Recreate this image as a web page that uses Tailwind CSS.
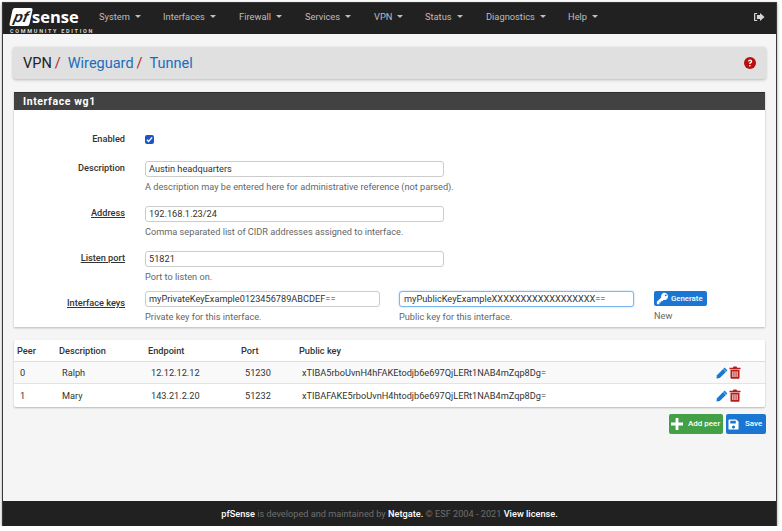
<!DOCTYPE html>
<html lang="en">
<head>
    <meta charset="utf-8"/>
    <title>pfSense - VPN / Wireguard / Tunnel</title>
    <script src="https://cdn.jsdelivr.net/npm/@tailwindcss/browser@4"></script>
</head>
<body class="bg-white font-['Roboto',sans-serif] text-[#212121] overflow-hidden">
    <div class="ml-[2px] mt-[2px] w-[775px] h-[524px] border-x border-t border-[#3a3a3a] bg-[#f5f5f5] flex flex-col shadow-[0_1px_3px_rgba(0,0,0,0.4)]">
        <!-- Navbar -->
        <nav class="h-[31px] shrink-0 bg-[#212121] flex items-center pb-[4px] text-[9.3px] text-[#bdbdbd]">
            <div class="w-[96px] pl-[8px] pt-[5px] shrink-0 self-start flex flex-col">
                <div class="flex items-center h-[18px]">
                    <span class="w-[20px] h-[18px] -skew-x-12 bg-white text-[#212121] font-bold italic text-[15px] leading-[17px] text-center rounded-[2px] font-['Liberation_Sans',sans-serif]">pf</span>
                    <span class="text-white font-bold text-[16.5px] leading-[18px] ml-[1px] font-['Open_Sans',sans-serif]">sense</span>
                </div>
                <span class="text-[#d8d8d8] text-[5.5px] leading-[6px] font-bold tracking-[1.7px] whitespace-nowrap -ml-[1px] mt-[2px]">COMMUNITY EDITION</span>
            </div>
            <div class="flex items-center">
                <a class="w-[64px] flex items-center whitespace-nowrap">System<i class="ml-[5px] border-x-[3px] border-t-[3px] border-x-transparent border-t-[#bdbdbd]"></i></a>
                <a class="w-[76px] flex items-center whitespace-nowrap">Interfaces<i class="ml-[5px] border-x-[3px] border-t-[3px] border-x-transparent border-t-[#bdbdbd]"></i></a>
                <a class="w-[66px] flex items-center whitespace-nowrap">Firewall<i class="ml-[5px] border-x-[3px] border-t-[3px] border-x-transparent border-t-[#bdbdbd]"></i></a>
                <a class="w-[69px] flex items-center whitespace-nowrap">Services<i class="ml-[5px] border-x-[3px] border-t-[3px] border-x-transparent border-t-[#bdbdbd]"></i></a>
                <a class="w-[51px] flex items-center whitespace-nowrap">VPN<i class="ml-[5px] border-x-[3px] border-t-[3px] border-x-transparent border-t-[#bdbdbd]"></i></a>
                <a class="w-[61px] flex items-center whitespace-nowrap">Status<i class="ml-[5px] border-x-[3px] border-t-[3px] border-x-transparent border-t-[#bdbdbd]"></i></a>
                <a class="w-[82px] flex items-center whitespace-nowrap">Diagnostics<i class="ml-[5px] border-x-[3px] border-t-[3px] border-x-transparent border-t-[#bdbdbd]"></i></a>
                <a class="flex items-center whitespace-nowrap">Help<i class="ml-[5px] border-x-[3px] border-t-[3px] border-x-transparent border-t-[#bdbdbd]"></i></a>
            </div>
            <svg class="ml-auto mr-[11px] w-[12px] h-[10px]" viewBox="0 0 13 11" fill="#d4d4d4">
                <path d="M4.5 1H2.2C1.500 1 1 1.500 1 2.200v6.600C1 9.500 1.500 10 2.200 10h2.300V8.700H2.400V2.300h2.100z"/>
                <path d="M7.600 1l5 4.500-5 4.500V7.600H4.200V3.400h3.400z"/>
            </svg>
        </nav>

        <main class="flex-1 px-[11px] flex flex-col">
            <!-- Breadcrumb -->
            <div class="mt-[13px] -ml-[1px] w-[753px] h-[32px] bg-[#e0e0e0] rounded-[3px] shadow-[0_1px_3px_rgba(0,0,0,0.25)] flex items-center pl-[10px] pr-[10px] text-[14.5px]">
                <span class="mt-[2px]">VPN</span><span class="mt-[2px] text-[#b71c1c] ml-[3px]">/</span>
                <a class="mt-[2px] text-[#1a6dbd] ml-[7px]">Wireguard</a><span class="mt-[2px] text-[#b71c1c] ml-[3px]">/</span>
                <a class="mt-[2px] text-[#1a6dbd] ml-[7px]">Tunnel</a>
                <svg class="ml-auto w-[12px] h-[12px]" viewBox="0 0 12 12">
                    <circle cx="6" cy="6" r="6" fill="#b71010"/>
                    <path d="M3.900 4.600C4 3.300 4.900 2.600 6.100 2.600c1.200 0 2.100.8 2.100 1.800 0 .9-.5 1.300-1.100 1.700-.4.3-.5.5-.5.9H5.200c0-.9.2-1.300.8-1.700.5-.3.8-.5.8-.9 0-.3-.3-.6-.7-.6-.5 0-.7.3-.8.8z" fill="#fff"/>
                    <rect x="5.200" y="8" width="1.400" height="1.400" fill="#fff"/>
                </svg>
            </div>

            <!-- Interface panel -->
            <section class="mt-[13px] w-[751px] bg-white shadow-[0_1px_2px_rgba(0,0,0,0.25)]">
                <h2 class="h-[18px] bg-[#424242] border-t border-[#2f2f2f] text-white font-bold text-[10.5px] tracking-[0.6px] leading-[17px] pl-[9px]">Interface wg1</h2>
                <div class="h-[217px] text-[9.2px]">
                    <div class="flex h-[51px] pt-[7px] items-center">
                        <label class="w-[111px] text-right font-medium text-[#333]">Enabled</label>
                        <span class="ml-[20px] w-[9px] h-[9px] rounded-[2px] bg-[#1a56c4] flex items-center justify-center">
                            <svg class="w-[7px] h-[7px]" viewBox="0 0 8 8"><path d="M1 4.200l2 2L7 1.600" fill="none" stroke="#fff" stroke-width="1.600"/></svg>
                        </span>
                    </div>
                    <div class="flex h-[45px]">
                        <label class="w-[111px] text-right font-medium text-[#333]">Description</label>
                        <div class="ml-[20px]">
                            <div class="w-[299px] h-[16px] border border-[#ccc] rounded-[3px] bg-white pl-[3px] leading-[14px] text-[#333]">Austin headquarters</div>
                            <p class="mt-[4px] text-[#666] leading-[11px]">A description may be entered here for administrative reference (not parsed).</p>
                        </div>
                    </div>
                    <div class="flex h-[45px]">
                        <label class="w-[111px] text-right font-medium text-[#333] underline">Address</label>
                        <div class="ml-[20px]">
                            <div class="w-[299px] h-[16px] border border-[#ccc] rounded-[3px] bg-white pl-[3px] leading-[14px] text-[#333]">192.168.1.23/24</div>
                            <p class="mt-[4px] text-[#666] leading-[11px]">Comma separated list of CIDR addresses assigned to interface.</p>
                        </div>
                    </div>
                    <div class="flex h-[40px]">
                        <label class="w-[111px] text-right font-medium text-[#333] underline">Listen port</label>
                        <div class="ml-[20px]">
                            <div class="w-[299px] h-[16px] border border-[#ccc] rounded-[3px] bg-white pl-[3px] leading-[14px] text-[#333]">51821</div>
                            <p class="mt-[4px] text-[#666] leading-[11px]">Port to listen on.</p>
                        </div>
                    </div>
                    <div class="flex">
                        <label class="w-[111px] text-right font-medium text-[#333] underline pt-[5px]">Interface keys</label>
                        <div class="ml-[20px] w-[235px]">
                            <div class="h-[16px] border border-[#ccc] rounded-[3px] bg-white pl-[3px] leading-[14px] text-[#333]">myPrivateKeyExample0123456789ABCDEF==</div>
                            <p class="mt-[4px] text-[#666] leading-[11px]">Private key for this interface.</p>
                        </div>
                        <div class="ml-[19px] w-[235px]">
                            <div class="h-[16px] border border-[#7db7ee] rounded-[3px] bg-white pl-[4px] leading-[14px] text-[#333] shadow-[0_0_2px_#9ecbf5]">myPublicKeyExampleXXXXXXXXXXXXXXXXXX==</div>
                            <p class="mt-[4px] text-[#666] leading-[11px]">Public key for this interface.</p>
                        </div>
                        <div class="ml-[20px]">
                            <button class="h-[15px] w-[53px] bg-[#1976d2] rounded-[2px] text-white text-[7.8px] font-medium flex items-center pl-[2px] gap-[2px]">
                                <svg class="w-[13px] h-[13px]" viewBox="0 0 12 12" fill="#fff"><path d="M8 .8a3.300 3.300 0 0 0-3.200 4.200L.8 9v2.200h2.400V9.800h1.300V8.500h1.300L7 7.300A3.300 3.300 0 1 0 8 .8zm1 1.400a.9.9 0 1 1 0 1.800.9.9 0 0 1 0-1.800z"/></svg>
                                Generate
                            </button>
                            <p class="mt-[4px] text-[#666] leading-[11px]">New</p>
                        </div>
                    </div>
                </div>
            </section>

            <!-- Peers table -->
            <section class="mt-[13px] w-[751px] bg-white shadow-[0_1px_2px_rgba(0,0,0,0.25)] text-[9.2px] rounded-[2px]">
                <div class="h-[22px] flex items-center font-medium text-[#333] border-b border-[#ddd] shadow-[0_1px_1px_rgba(0,0,0,0.06)]">
                    <span class="w-[45px] pl-[3px]">Peer</span>
                    <span class="w-[89px]">Description</span>
                    <span class="w-[93px]">Endpoint</span>
                    <span class="w-[58px]">Port</span>
                    <span>Public key</span>
                </div>
                <div class="h-[22px] flex items-center bg-[#f9f9f9] border-b border-[#e4e4e4] text-[#333]">
                    <span class="w-[45px] pl-[6px]">0</span>
                    <span class="w-[89px] pl-[3px]">Ralph</span>
                    <span class="w-[93px] pl-[3px]">12.12.12.12</span>
                    <span class="w-[58px] pl-[4px]">51230</span>
                    <span class="pl-[3px]">xTIBA5rboUvnH4hFAKEtodjb6e697QjLERt1NAB4mZqp8Dg=</span>
                    <svg class="ml-auto w-[12px] h-[12px]" viewBox="0 0 12 12"><path d="M8.600.6l2.800 2.800-7.600 7.600L.4 11.600 1 8.200z" fill="#1976d2"/><path d="M7.400 2l2.600 2.600" stroke="#fff" stroke-width=".6"/></svg>
                    <svg class="ml-[1px] mr-[24px] w-[12px] h-[13px]" viewBox="0 0 12 13"><path d="M4.500.5h3l.7 1.300H11.500v1.400h-11V1.800h3.300z" fill="#b71c1c"/><path fill-rule="evenodd" d="M1.500 3.800h9v7.900c0 .6-.4 1-1 1h-7c-.6 0-1-.4-1-1zM3.400 5.300v5.800h1V5.300zm2.100 0v5.800h1V5.300zm2.100 0v5.800h1V5.300z" fill="#b71c1c"/></svg>
                </div>
                <div class="h-[23px] flex items-center text-[#333]">
                    <span class="w-[45px] pl-[6px]">1</span>
                    <span class="w-[89px] pl-[3px]">Mary</span>
                    <span class="w-[93px] pl-[3px]">143.21.2.20</span>
                    <span class="w-[58px] pl-[4px]">51232</span>
                    <span class="pl-[3px]">xTIBAFAKE5rboUvnH4htodjb6e697QjLERt1NAB4mZqp8Dg=</span>
                    <svg class="ml-auto w-[12px] h-[12px]" viewBox="0 0 12 12"><path d="M8.600.6l2.800 2.800-7.600 7.600L.4 11.600 1 8.200z" fill="#1976d2"/><path d="M7.400 2l2.600 2.600" stroke="#fff" stroke-width=".6"/></svg>
                    <svg class="ml-[1px] mr-[24px] w-[12px] h-[13px]" viewBox="0 0 12 13"><path d="M4.500.5h3l.7 1.300H11.500v1.400h-11V1.800h3.300z" fill="#b71c1c"/><path fill-rule="evenodd" d="M1.500 3.800h9v7.900c0 .6-.4 1-1 1h-7c-.6 0-1-.4-1-1zM3.400 5.300v5.800h1V5.300zm2.100 0v5.800h1V5.300zm2.100 0v5.800h1V5.300z" fill="#b71c1c"/></svg>
                </div>
            </section>

            <div class="mt-[7px] w-[752px] flex justify-end gap-[3px] text-white text-[8px] font-medium">
                <button class="w-[54px] h-[20px] bg-[#43a047] rounded-[2px] flex items-center pl-[2px] gap-[5px]">
                    <svg class="w-[12px] h-[12px]" viewBox="0 0 11 11"><path d="M4.200 0h2.600v4.200H11v2.600H6.800V11H4.200V6.800H0V4.200h4.200z" fill="#fff"/></svg>
                    Add peer
                </button>
                <button class="w-[40px] h-[20px] bg-[#1976d2] rounded-[2px] flex items-center pl-[2px] gap-[6px]">
                    <svg class="w-[11px] h-[11px]" viewBox="0 0 12 12"><path fill-rule="evenodd" d="M1.500.5h7.500l2.500 2.500v7.500c0 .6-.4 1-1 1h-9c-.6 0-1-.4-1-1v-9c0-.6.4-1 1-1zM2.500 2v3h6V2zM6 7a1.700 1.700 0 1 0 0 3.400A1.700 1.700 0 0 0 6 7z" fill="#fff"/></svg>
                    Save
                </button>
            </div>
        </main>

        <!-- Footer -->
        <footer class="h-[25px] shrink-0 bg-[#212121] flex items-center justify-center text-[9.2px] text-[#6f6f6f]">
            <span><b class="font-medium text-white">pfSense</b> is developed and maintained by <b class="font-medium text-white">Netgate.</b> © ESF 2004 - 2021 <b class="font-medium text-white">View license.</b></span>
        </footer>
    </div>
</body>
</html>
